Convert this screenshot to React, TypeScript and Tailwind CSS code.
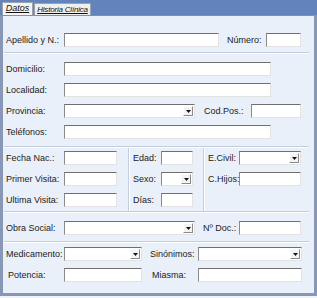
import React from "react";

const font = { fontFamily: '"Liberation Sans", Arial, sans-serif' };

/* sunken text box */
const Box = ({ w }: { w: string }) => (
  <div
    className={`h-[14px] shrink-0 bg-white border border-t-[#6f6f6f] border-l-[#8a8a8a] border-r-[#e2e2e2] border-b-[#e2e2e2] ${w}`}
  />
);

/* combo box with the small arrow button */
const Combo = ({ w }: { w: string }) => (
  <div
    className={`h-[14px] shrink-0 bg-white border border-t-[#6f6f6f] border-l-[#8a8a8a] border-r-[#e2e2e2] border-b-[#e2e2e2] flex items-center justify-end pr-[1px] ${w}`}
  >
    <div className="w-[10px] h-[10px] bg-[#f3f3f3] border border-t-[#ffffff] border-l-[#ffffff] border-r-[#8a8a8a] border-b-[#8a8a8a] flex items-center justify-center">
      <svg width="5" height="3" viewBox="0 0 5 3">
        <path d="M0 0h5L2.5 3z" fill="#111" />
      </svg>
    </div>
  </div>
);

const Label = ({ w, children }: { w: string; children: React.ReactNode }) => (
  <div className={`shrink-0 text-[9px] leading-none text-[#222] whitespace-nowrap ${w}`}>{children}</div>
);

const Sep = ({ mt }: { mt: string }) => (
  <div className={`h-[2px] ml-[1px] mr-[5px] border-t border-[#c3cddc] border-b border-b-white ${mt}`} />
);

const VSep = () => <div className="w-[2px] shrink-0 border-l border-[#c3cddc] border-r border-r-white" />;

export default function App() {
  return (
    <div className="w-[317px] h-[298px] bg-[#eef3fa] flex flex-col" style={font}>
      {/* tab strip */}
      <div className="h-[15px] bg-[#6283bb] flex items-end pl-[2px] gap-[1px]">
        <div className="h-[13px] w-[31px] bg-[#f4f4f4] border border-b-0 border-[#9aa3b0] flex items-center justify-center text-[9px] italic underline text-[#111] whitespace-nowrap">
          Datos
        </div>
        <div className="h-[12px] w-[57px] bg-[#efefef] border border-b-0 border-[#9aa3b0] flex items-center justify-center text-[8px] italic underline text-[#111] whitespace-nowrap tracking-[-0.2px]">
          Historia Clínica
        </div>
      </div>

      {/* panel */}
      <div className="h-[281px] bg-[#e9f0fa] border-t border-t-[#7f91b2] border-l-[3px] border-r-[3px] border-b-[3px] border-[#8797b5] flex flex-col">
        <div className="flex items-center mt-[17px]">
          <Label w="w-[61px] pl-[3px]">Apellido y N.:</Label>
          <Box w="w-[155px]" />
          <Label w="w-[47px] pl-[8px]">Número:</Label>
          <Box w="w-[35px]" />
        </div>

        <Sep mt="mt-[5px]" />

        <div className="flex items-center mt-[8px]">
          <Label w="w-[61px] pl-[3px]">Domicilio:</Label>
          <Box w="w-[207px]" />
        </div>
        <div className="flex items-center mt-[7px]">
          <Label w="w-[61px] pl-[3px]">Localidad:</Label>
          <Box w="w-[207px]" />
        </div>
        <div className="flex items-center mt-[7px]">
          <Label w="w-[61px] pl-[3px]">Provincia:</Label>
          <Combo w="w-[131px]" />
          <Label w="w-[56px] pl-[9px]">Cod.Pos.:</Label>
          <Box w="w-[50px]" />
        </div>
        <div className="flex items-center mt-[7px]">
          <Label w="w-[61px] pl-[3px]">Teléfonos:</Label>
          <Box w="w-[207px]" />
        </div>

        <Sep mt="mt-[7px]" />

        <div className="flex h-[63px]">
          <div className="w-[125px] shrink-0 flex flex-col gap-[7px] pt-[3px]">
            <div className="flex items-center">
              <Label w="w-[61px] pl-[3px]">Fecha Nac.:</Label>
              <Box w="w-[53px]" />
            </div>
            <div className="flex items-center">
              <Label w="w-[61px] pl-[3px]">Primer Visita:</Label>
              <Box w="w-[53px]" />
            </div>
            <div className="flex items-center">
              <Label w="w-[61px] pl-[3px]">Ultima Visita:</Label>
              <Box w="w-[53px]" />
            </div>
          </div>
          <VSep />
          <div className="w-[73px] shrink-0 flex flex-col gap-[7px] pt-[3px]">
            <div className="flex items-center">
              <Label w="w-[31px] pl-[3px]">Edad:</Label>
              <Box w="w-[32px]" />
            </div>
            <div className="flex items-center">
              <Label w="w-[31px] pl-[3px]">Sexo:</Label>
              <Combo w="w-[32px]" />
            </div>
            <div className="flex items-center">
              <Label w="w-[31px] pl-[3px]">Días:</Label>
              <Box w="w-[32px]" />
            </div>
          </div>
          <VSep />
          <div className="flex flex-col gap-[7px] pt-[3px]">
            <div className="flex items-center">
              <Label w="w-[34px] pl-[3px]">E.Civil:</Label>
              <Combo w="w-[62px]" />
            </div>
            <div className="flex items-center">
              <Label w="w-[34px] pl-[3px]">C.Hijos:</Label>
              <Box w="w-[62px]" />
            </div>
          </div>
        </div>

        <Sep mt="mt-0" />

        <div className="flex items-center mt-[8px]">
          <Label w="w-[61px] pl-[3px]">Obra Social:</Label>
          <Combo w="w-[131px]" />
          <Label w="w-[44px] pl-[8px]">Nº Doc.:</Label>
          <Box w="w-[62px]" />
        </div>

        <Sep mt="mt-[6px]" />

        <div className="flex items-center mt-[4px]">
          <Label w="w-[61px] pl-[3px]">Medicamento:</Label>
          <Combo w="w-[78px]" />
          <Label w="w-[56px] pl-[8px]">Sinónimos:</Label>
          <Combo w="w-[104px]" />
        </div>
        <div className="flex items-center mt-[7px]">
          <Label w="w-[61px] pl-[5px]">Potencia:</Label>
          <Box w="w-[78px]" />
          <Label w="w-[56px] pl-[10px]">Miasma:</Label>
          <Box w="w-[104px]" />
        </div>
      </div>
    </div>
  );
}
